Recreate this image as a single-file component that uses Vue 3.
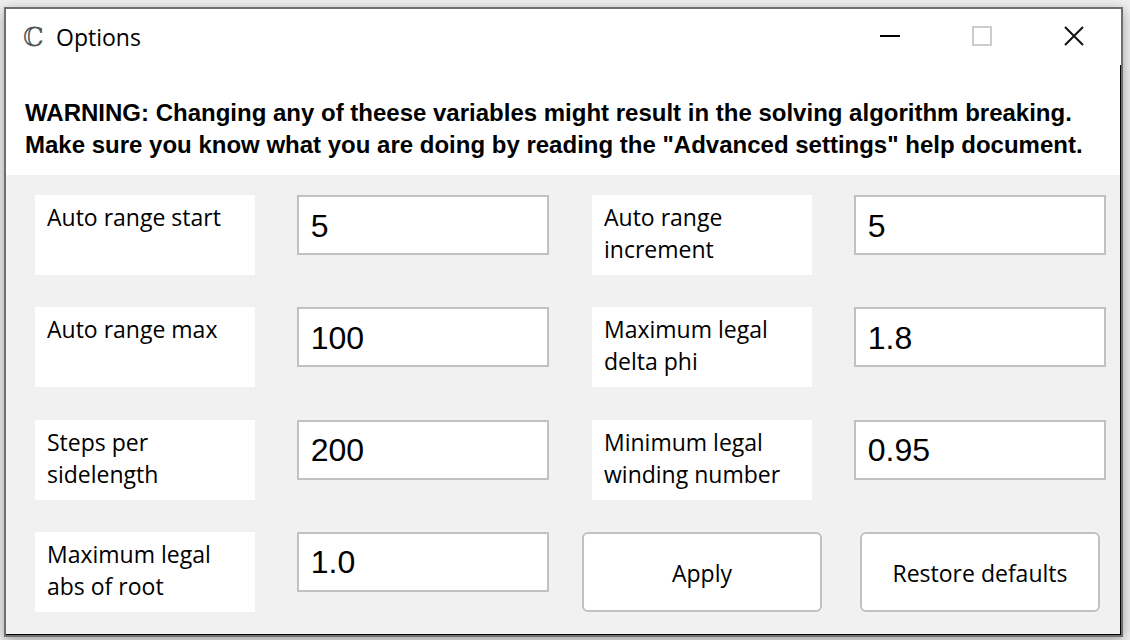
<script setup>
import { reactive } from 'vue'

const columns = reactive([
  [
    { id: 'range-start', label: 'Auto range start', value: '5' },
    { id: 'range-max', label: 'Auto range max', value: '100' },
    { id: 'steps', label: 'Steps per sidelength', value: '200' },
    { id: 'max-abs', label: 'Maximum legal abs of root', value: '1.0' },
  ],
  [
    { id: 'range-increment', label: 'Auto range increment', value: '5' },
    { id: 'max-delta', label: 'Maximum legal delta phi', value: '1.8' },
    { id: 'min-winding', label: 'Minimum legal winding number', value: '0.95' },
  ],
])
</script>

<template>
  <div class="desktop">
    <main class="window">
      <header class="titlebar">
        <span class="logo" aria-hidden="true">ℂ</span>
        <h1 class="title">Options</h1>
        <div class="controls">
          <button type="button" class="control" aria-label="Minimize">
            <svg width="20" height="20" viewBox="0 0 20 20"><path d="M0 10H20" stroke="#000" stroke-width="2" /></svg>
          </button>
          <button type="button" class="control" aria-label="Maximize" disabled>
            <svg width="20" height="20" viewBox="0 0 20 20"><path d="M1 1H19V19H1Z" fill="none" stroke="#ccc" stroke-width="2" /></svg>
          </button>
          <button type="button" class="control" aria-label="Close">
            <svg width="20" height="20" viewBox="0 0 20 20"><path d="M1 1L19 19M19 1L1 19" stroke="#111" stroke-width="2" /></svg>
          </button>
        </div>
      </header>
      <div class="client">
        <p class="warning">
          WARNING: Changing any of theese variables might result in the solving algorithm breaking.<br />
          Make sure you know what you are doing by reading the "Advanced settings" help document.
        </p>
        <form class="options" @submit.prevent>
          <div v-for="(fields, i) in columns" :key="i" class="column" :class="{ second: i === 1 }">
            <div v-for="field in fields" :key="field.id" class="field">
              <label class="label" :for="field.id">{{ field.label }}</label>
              <input :id="field.id" v-model="field.value" class="input" type="text" />
            </div>
            <div v-if="i === 1" class="actions">
              <button type="submit" class="action">Apply</button>
              <button type="button" class="action">Restore defaults</button>
            </div>
          </div>
        </form>
      </div>
    </main>
  </div>
</template>

<style>
body {
  margin: 0;
  background: #f0f0f0;
}
</style>

<style scoped>
* {
  box-sizing: border-box;
}
.desktop {
  display: flex;
  min-height: 100vh;
  padding: 7px 7px 3px 4px;
  overflow: hidden;
  font-family: "Open Sans", "Noto Sans", sans-serif;
  font-size: 23px;
  line-height: 32px;
  color: #000;
}
.window {
  display: flex;
  flex: 1;
  flex-direction: column;
  min-width: 0;
  border: 2px solid #6f6f6f;
  background: #fff;
  box-shadow: 0 3px 12px rgba(0, 0, 0, 0.35);
}
.titlebar {
  display: flex;
  align-items: center;
  height: 56px;
  padding-left: 17px;
}
.logo {
  width: 33px;
  font-family: "DejaVu Serif", "DejaVu Sans", serif;
  font-size: 26px;
  color: #555;
}
.title {
  margin: 0;
  font-size: 23px;
  font-weight: 400;
}
.controls {
  display: flex;
  align-self: flex-start;
  margin-right: 1px;
  margin-left: auto;
}
.control {
  display: flex;
  align-items: center;
  justify-content: center;
  width: 92px;
  height: 54px;
  padding: 0;
  border: 0;
  background: none;
}
.client {
  display: flex;
  flex: 1;
  flex-direction: column;
  border-right: 1px solid #000;
  border-bottom: 1px solid #000;
}
.warning {
  margin: 0;
  padding: 32px 19px 14px;
  font-family: "Liberation Sans", Arial, sans-serif;
  font-size: 24px;
  font-weight: 700;
}
.options {
  display: flex;
  flex: 1;
  gap: 33px;
  padding: 20px 14px 22px 29px;
  background: #f1f1f1;
}
.column {
  display: flex;
  flex: 514 1 0;
  flex-direction: column;
  justify-content: space-between;
  min-width: 0;
}
.second {
  flex-grow: 524;
}
.field {
  display: flex;
  align-items: flex-start;
  gap: 42px;
}
.second .field {
  padding-left: 10px;
}
.label {
  flex: 220 1 0;
  min-width: 0;
  min-height: 80px;
  padding: 6px 12px 10px;
  background: #fff;
}
.input {
  flex: 252 1 0;
  min-width: 0;
  height: 60px;
  padding: 2px 12px 0;
  border: 2px solid #c1c1c1;
  border-radius: 0;
  background: #fff;
  font-family: "Liberation Sans", Arial, sans-serif;
  font-size: 32px;
  color: #000;
}
.actions {
  display: flex;
  gap: 38px;
  padding-right: 6px;
}
.action {
  flex: 1 1 0;
  min-width: 0;
  height: 80px;
  padding: 2px 0 0;
  border: 2px solid #c1c1c1;
  border-radius: 6px;
  background: #fff;
  font: inherit;
  color: #000;
}
</style>
